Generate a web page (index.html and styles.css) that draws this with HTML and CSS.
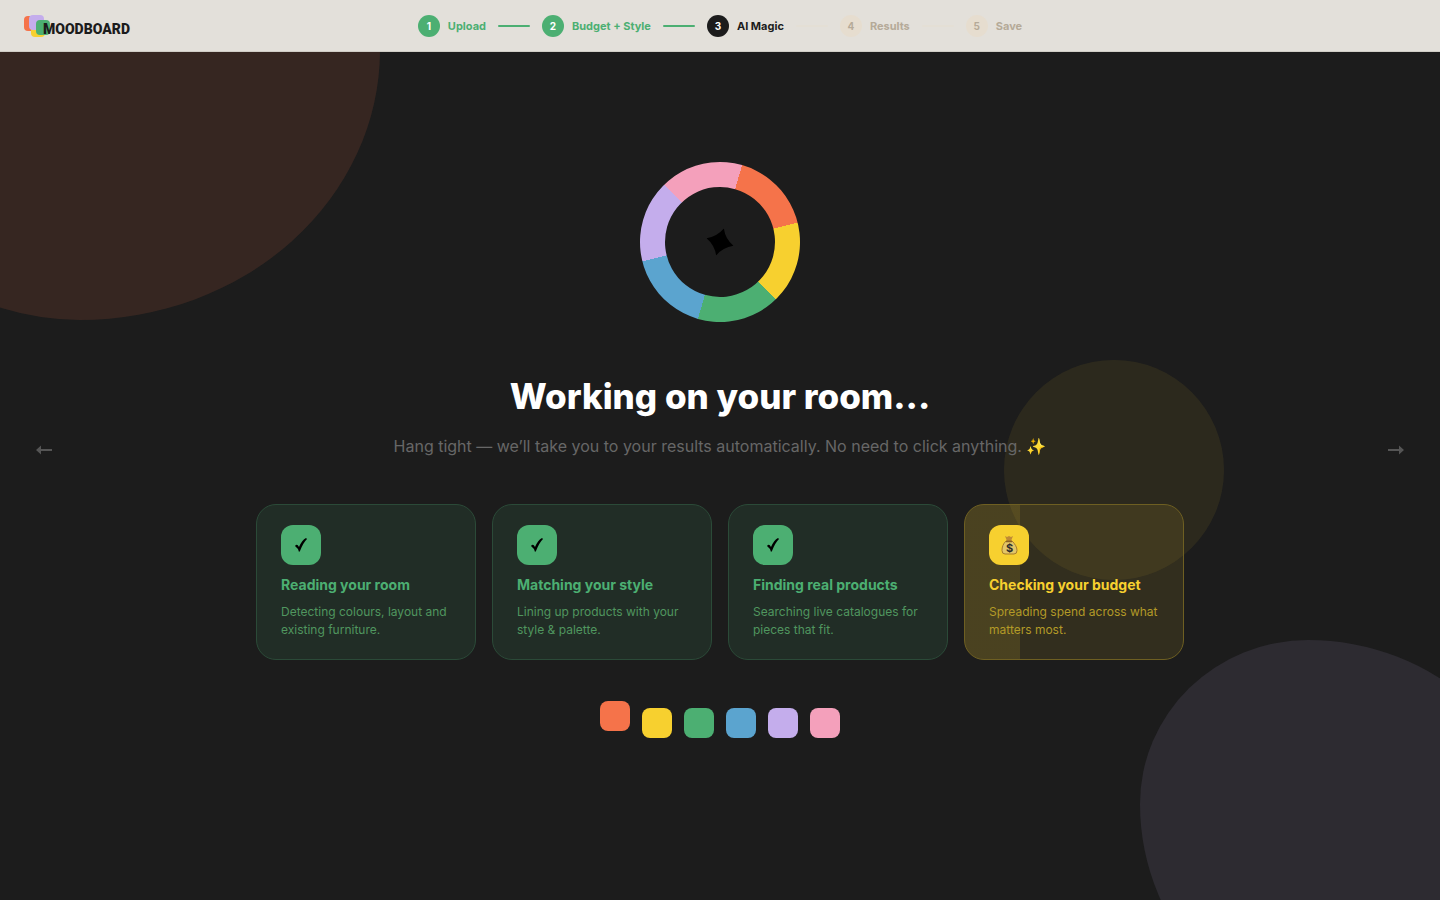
FILE: index.html
```html
<!DOCTYPE html>
<html lang="en">
<head>
    <meta charset="utf-8">
    <title>Moodboard</title>
    <link rel="stylesheet" href="styles.css">
</head>
<body>
    <header class="nav">
        <a class="logo" href="#">
            <svg class="logo-mark" width="26" height="24" viewBox="0 0 26 24" aria-hidden="true">
                <rect x="0" y="2" width="14" height="15" rx="4" fill="#f5734a"/>
                <rect x="7" y="9" width="14" height="14" rx="4" fill="#f7d02f"/>
                <rect x="5" y="1" width="15" height="15" rx="4" fill="#c4adec"/>
                <rect x="12" y="6" width="14" height="15" rx="4" fill="#4caf72"/>
            </svg>
            <span class="logo-text">MOODBOARD</span>
        </a>
        <nav class="steps">
            <div class="step done"><span class="num">1</span>Upload</div>
            <div class="line done"></div>
            <div class="step done"><span class="num">2</span>Budget + Style</div>
            <div class="line done"></div>
            <div class="step active"><span class="num">3</span>AI Magic</div>
            <div class="line"></div>
            <div class="step"><span class="num">4</span>Results</div>
            <div class="line"></div>
            <div class="step"><span class="num">5</span>Save</div>
        </nav>
    </header>

    <main class="loading">
        <div class="blob blob-orange"></div>
        <div class="blob blob-yellow"></div>
        <div class="blob blob-purple"></div>

        <button type="button" class="arrow prev" aria-label="Previous">
            <svg width="16" height="10" viewBox="0 0 16 10"><path d="M0 5 5 .5V4h11v2H5v3.500z" fill="currentColor"/></svg>
        </button>
        <button type="button" class="arrow next" aria-label="Next">
            <svg width="16" height="10" viewBox="0 0 16 10"><path d="M16 5 11 .5V4H0v2h11v3.500z" fill="currentColor"/></svg>
        </button>

        <div class="wheel">
            <div class="wheel-hole">
                <svg width="28" height="28" viewBox="0 0 26 26"><path d="M13 0Q17 9 26 13Q17 17 13 26Q9 17 0 13Q9 9 13 0z"/></svg>
            </div>
        </div>

        <h1>Working on your room...</h1>
        <p class="sub">Hang tight — we’ll take you to your results automatically. No need to click anything. ✨</p>

        <div class="cards">
            <div class="card done">
                <div class="icon">
                    <svg width="12" height="14" viewBox="0 0 12 14" aria-hidden="true"><path d="M0 8Q2 5 4 9Q7 2 11 0L12 1Q8 5 5 13L4 14Q3 10 0 8z"/></svg>
                </div>
                <h2>Reading your room</h2>
                <p>Detecting colours, layout and existing furniture.</p>
            </div>
            <div class="card done">
                <div class="icon">
                    <svg width="12" height="14" viewBox="0 0 12 14" aria-hidden="true"><path d="M0 8Q2 5 4 9Q7 2 11 0L12 1Q8 5 5 13L4 14Q3 10 0 8z"/></svg>
                </div>
                <h2>Matching your style</h2>
                <p>Lining up products with your style &amp; palette.</p>
            </div>
            <div class="card done">
                <div class="icon">
                    <svg width="12" height="14" viewBox="0 0 12 14" aria-hidden="true"><path d="M0 8Q2 5 4 9Q7 2 11 0L12 1Q8 5 5 13L4 14Q3 10 0 8z"/></svg>
                </div>
                <h2>Finding real products</h2>
                <p>Searching live catalogues for pieces that fit.</p>
            </div>
            <div class="card current">
                <div class="icon">
                    <svg width="18" height="20" viewBox="0 0 18 20" aria-hidden="true">
                        <path d="M5 1l2 1 2-1 2 1 2-1-2 5H7z" fill="#c08a35"/>
                        <path d="M6 6C3 9 2 12 2 15.500Q2 19 5 19h9q3 0 3-3.500C17 12 15 9 12 6z" fill="#e3c667" stroke="#a67c2c"/>
                        <path d="M6 6.500h6" stroke="#8a6120" stroke-width="1.500"/>
                        <text x="9.500" y="16.500" class="coin">$</text>
                    </svg>
                </div>
                <h2>Checking your budget</h2>
                <p>Spreading spend across what matters most.</p>
            </div>
        </div>

        <div class="swatches">
            <span class="swatch orange"></span>
            <span class="swatch yellow"></span>
            <span class="swatch green"></span>
            <span class="swatch blue"></span>
            <span class="swatch purple"></span>
            <span class="swatch pink"></span>
        </div>
    </main>
</body>
</html>
```
FILE: styles.css
```css
* {
    box-sizing: border-box;
}

body {
    margin: 0;
    background: #1c1c1c;
    color: #fff;
    font-family: Inter, "Liberation Sans", sans-serif;
}

h1, h2, p {
    margin: 0;
}

/* top bar */
.nav {
    display: grid;
    grid-template-columns: 1fr auto 1fr;
    align-items: center;
    height: 52px;
    padding: 0 24px;
    background: #e3e0da;
    border-bottom: 1px solid #d0cdc6;
}

.logo {
    display: flex;
    align-items: center;
    color: #1c1c1c;
    text-decoration: none;
}

.logo-mark {
    margin-right: -7px;
}

.logo-text {
    position: relative;
    padding-top: 6px;
    font-family: Roboto, "Liberation Sans", sans-serif;
    font-size: 14px;
    font-weight: 900;
    line-height: 20px;
}

.steps {
    display: flex;
    align-items: center;
    gap: 12px;
}

.step {
    display: flex;
    align-items: center;
    gap: 8px;
    color: #b5aa98;
    font-size: 11px;
    font-weight: 700;
    white-space: nowrap;
}

.num {
    display: flex;
    align-items: center;
    justify-content: center;
    width: 22px;
    height: 22px;
    border-radius: 50%;
    background: #e6ddcf;
    font-size: 10px;
}

.step.done {
    color: #4caf72;
}

.step.active {
    color: #1c1c1c;
}

.step.done .num {
    background: #4caf72;
    color: #fff;
}

.step.active .num {
    background: #1c1c1c;
    color: #fff;
}

.line {
    width: 32px;
    height: 2px;
    border-radius: 2px;
    background: #e4dfd5;
}

.line.done {
    background: #4caf72;
}

/* loading screen */
.loading {
    position: relative;
    display: flex;
    flex-direction: column;
    align-items: center;
    justify-content: center;
    min-height: calc(100vh - 52px);
    padding: 0 24px 52px;
    overflow: hidden;
}

.blob {
    position: absolute;
}

.blob-orange {
    top: -232px;
    left: -120px;
    width: 500px;
    height: 500px;
    border-radius: 60% 40% 60% 40% / 60% 40% 54% 30%;
    background: rgba(245, 115, 74, 0.12);
}

.blob-yellow {
    top: 308px;
    right: 15%;
    width: 220px;
    height: 220px;
    border-radius: 50%;
    background: rgba(247, 208, 47, 0.08);
}

.blob-purple {
    right: -100px;
    bottom: -140px;
    width: 400px;
    height: 400px;
    border-radius: 42% 58% 40% 60% / 41% 54% 46% 59%;
    background: rgba(196, 173, 236, 0.1);
}

.arrow {
    position: absolute;
    top: 378px;
    display: flex;
    padding: 15px 12px;
    border: none;
    background: none;
    color: #555;
    cursor: pointer;
}

.prev {
    left: 24px;
}

.next {
    right: 24px;
}

.wheel {
    display: flex;
    align-items: center;
    justify-content: center;
    width: 160px;
    height: 160px;
    margin-bottom: 48px;
    border-radius: 50%;
    background: conic-gradient(#f5734a 0 60deg, #f7d02f 0 120deg, #4caf72 0 180deg, #5ba4cf 0 240deg, #c4adec 0 300deg, #f4a0bb 0);
    transform: rotate(16deg);
}

.wheel-hole {
    display: flex;
    align-items: center;
    justify-content: center;
    width: 110px;
    height: 110px;
    border-radius: 50%;
    background: #1c1c1c;
}

h1 {
    position: relative;
    margin-bottom: 12px;
    font-size: 35px;
    font-weight: 800;
    line-height: 52px;
}

.sub {
    position: relative;
    margin-bottom: 46px;
    color: #676767;
    font-size: 16px;
    line-height: 24px;
}

.cards {
    position: relative;
    display: grid;
    grid-template-columns: repeat(4, 1fr);
    gap: 16px;
    width: 100%;
    max-width: 928px;
    margin-bottom: 48px;
}

.card {
    padding: 20px 24px;
    border: 1px solid #2b4a38;
    border-radius: 20px;
    background: rgba(76, 175, 114, 0.12);
    color: #4caf72;
}

.card.current {
    border-color: #6e5f22;
    background: linear-gradient(90deg, rgba(247, 208, 47, 0.12) 25%, transparent 25%), rgba(247, 208, 47, 0.1);
    color: #f7d02f;
}

.icon {
    display: flex;
    align-items: center;
    justify-content: center;
    width: 40px;
    height: 40px;
    margin-bottom: 10px;
    border-radius: 12px;
    background: #4caf72;
    color: #000;
}

.current .icon {
    background: #f7d02f;
}

.coin {
    fill: #2b2b2b;
    font-size: 11px;
    font-weight: 700;
    text-anchor: middle;
}

.card h2 {
    margin-bottom: 8px;
    font-size: 14px;
    font-weight: 700;
    line-height: 20px;
}

.card p {
    color: #50965f;
    font-size: 12px;
    line-height: 18px;
}

.card.current p {
    color: #b39a27;
}

.swatches {
    position: relative;
    display: flex;
    gap: 12px;
}

.swatch {
    width: 30px;
    height: 30px;
    border-radius: 8px;
}

.orange {
    background: #f5734a;
    transform: translateY(-7px);
}

.yellow {
    background: #f7d02f;
}

.green {
    background: #4caf72;
}

.blue {
    background: #5ba4cf;
}

.purple {
    background: #c4adec;
}

.pink {
    background: #f4a0bb;
}
```
